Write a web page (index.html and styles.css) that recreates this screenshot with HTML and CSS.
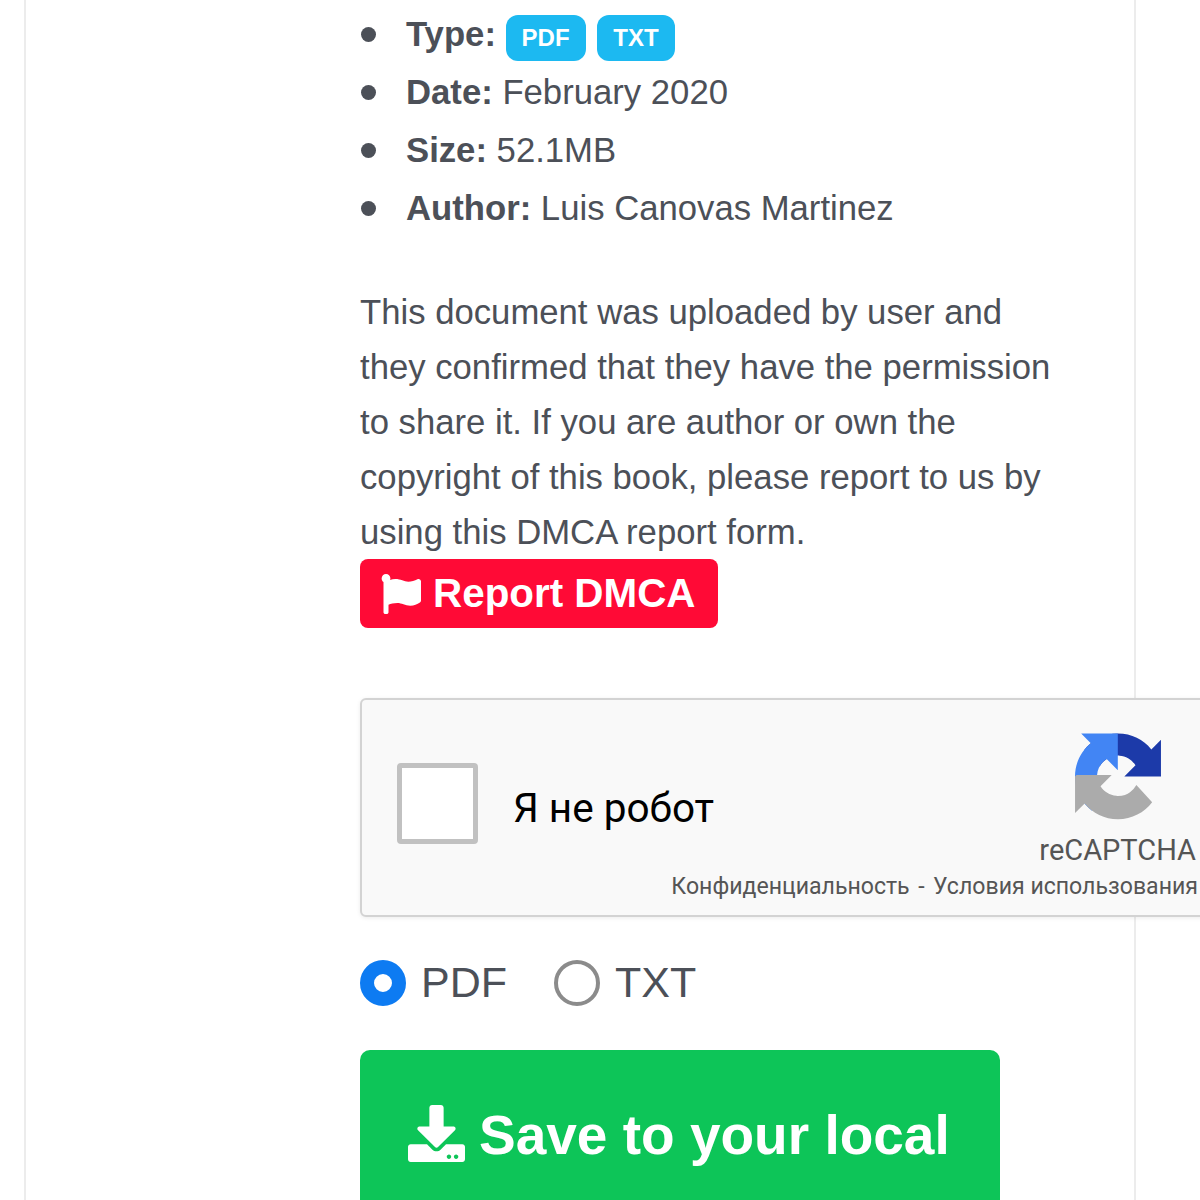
FILE: index.html
```
<!DOCTYPE html>
<html lang="en">
<head>
<meta charset="utf-8">
<title>Document</title>
<link rel="stylesheet" href="styles.css">
</head>
<body>
<main class="panel">
  <ul class="meta">
    <li><b>Type:</b> <span class="badge">PDF</span> <span class="badge">TXT</span></li>
    <li><b>Date:</b> February 2020</li>
    <li><b>Size:</b> 52.1MB</li>
    <li><b>Author:</b> Luis Canovas Martinez</li>
  </ul>
  <p class="notice">This document was uploaded by user and they confirmed that they have the permission to share it. If you are author or own the copyright of this book, please report to us by using this DMCA report form.</p>
  <a class="report" href="#">
    <svg class="report-icon" viewBox="0 0 512 512"><path fill="currentColor" d="M349.565 98.783C295.978 98.783 251.721 64 184.348 64c-24.955 0-47.309 4.384-68.045 12.013a55.947 55.947 0 0 0 3.586-23.562C118.117 24.015 94.806 1.206 66.338.048 34.345-1.254 8 24.296 8 56c0 19.026 9.497 35.825 24 45.945V488c0 13.255 10.745 24 24 24h16c13.255 0 24-10.745 24-24v-94.4c28.311-12.064 63.582-22.122 114.435-22.122 53.588 0 97.844 34.783 165.217 34.783 48.169 0 86.667-16.294 122.505-40.858C506.84 359.452 512 349.571 512 339.045v-243.1c0-23.393-24.269-38.87-45.485-29.016-34.338 15.948-76.454 31.854-116.95 31.854z"/></svg>
    Report DMCA
  </a>
  <div class="captcha">
    <span class="captcha-box"></span>
    <span class="captcha-label">Я не робот</span>
    <div class="captcha-side">
      <div class="captcha-brand">
        <svg class="captcha-logo" viewBox="0 0 64 64">
          <path fill="#1c3aa9" d="M64 31.955l-.033-1.37V4.687l-7.16 7.16C50.948 4.674 42.033.093 32.05.093c-10.4 0-19.622 4.96-25.458 12.64l11.736 11.86a15.55 15.55 0 0 1 4.754-5.334c2.05-1.6 4.952-2.906 8.968-2.906.485 0 .86.057 1.135.163 4.976.393 9.29 3.14 11.83 7.126l-8.307 8.307 26.2.001"/>
          <path fill="#4285f4" d="M31.862.001l-1.37.033H4.594l7.16 7.16C4.58 13.053 0 21.968 0 31.95c0 10.4 4.96 19.622 12.64 25.458L24.5 45.672a15.55 15.55 0 0 1-5.334-4.754c-1.6-2.05-2.906-4.952-2.906-8.968 0-.485.057-.86.163-1.135.393-4.976 3.14-9.29 7.126-11.83l8.307 8.307.001-26.2"/>
          <path fill="#ababab" d="M.001 31.955l.033 1.37v25.898l7.16-7.16c5.86 7.173 14.774 11.754 24.76 11.754 10.4 0 19.622-4.96 25.458-12.64L45.677 38.32a15.55 15.55 0 0 1-4.754 5.334c-2.05 1.6-4.952 2.906-8.968 2.906-.485 0-.86-.057-1.135-.163-4.976-.393-9.29-3.14-11.83-7.126l8.307-8.307-26.2-.001"/>
        </svg>
        <span class="captcha-name">reCAPTCHA</span>
      </div>
      <span class="captcha-links">Конфиденциальность<span class="captcha-sep">-</span>Условия использования</span>
    </div>
  </div>
  <div class="formats">
    <label class="format"><span class="radio radio-on"></span>PDF</label>
    <label class="format"><span class="radio"></span>TXT</label>
  </div>
  <a class="save" href="#">
    <svg class="save-icon" viewBox="0 0 512 512"><path fill="currentColor" d="M216 0h80c13.3 0 24 10.7 24 24v168h87.7c17.8 0 26.7 21.5 14.1 34.1L269.7 378.3c-7.5 7.5-19.8 7.5-27.3 0L90.1 226.1c-12.6-12.6-3.7-34.1 14.1-34.1H192V24c0-13.3 10.7-24 24-24zm296 376v112c0 13.3-10.7 24-24 24H24c-13.3 0-24-10.7-24-24V376c0-13.3 10.7-24 24-24h146.7l49 49c20.1 20.1 52.5 20.1 72.6 0l49-49H488c13.3 0 24 10.7 24 24zm-124 88c0-11-9-20-20-20s-20 9-20 20 9 20 20 20 20-9 20-20zm64 0c0-11-9-20-20-20s-20 9-20 20 9 20 20 20 20-9 20-20z"/></svg>
    Save to your local
  </a>
</main>
</body>
</html>
```
FILE: styles.css
```
html, body {
  margin: 0;
  height: 1200px;
  overflow: hidden;
  background: #fff;
}
body {
  font-family: "Liberation Sans", Arial, sans-serif;
  color: #4c5058;
  font-size: 34.7px;
}
.panel {
  box-sizing: border-box;
  width: 1112px;
  height: 1200px;
  margin-left: 24px;
  padding: 5px 0 0 334px;
  border-left: 2px solid #ececec;
  border-right: 2px solid #ececec;
}
.meta {
  margin: 0;
  padding: 0;
  list-style: none;
}
.meta li {
  height: 58px;
  line-height: 58px;
  white-space: nowrap;
}
.meta li::before {
  content: "";
  display: inline-block;
  width: 15px;
  height: 15px;
  margin: 0 30px 0 1px;
  border-radius: 50%;
  background: #4c5058;
  vertical-align: 4px;
}
.meta b {
  font-weight: 700;
}
.badge {
  display: inline-block;
  height: 46px;
  line-height: 46px;
  padding: 0 16px;
  border-radius: 12px;
  background: #1cb9f1;
  color: #fff;
  font-size: 24px;
  font-weight: 700;
}
.badge + .badge {
  margin-left: 2px;
}
.notice {
  width: 700px;
  margin: 48px 0 0;
  line-height: 55px;
}
.report {
  display: flex;
  align-items: center;
  gap: 12px;
  width: 358px;
  height: 69px;
  box-sizing: border-box;
  padding-left: 21px;
  margin-top: -1px;
  border-radius: 8px;
  background: #ff0a36;
  color: #fff;
  font-size: 40.4px;
  font-weight: 700;
  text-decoration: none;
  white-space: nowrap;
}
.report-icon {
  width: 40px;
  height: 40px;
  flex: none;
}
.captcha {
  display: flex;
  align-items: center;
  box-sizing: border-box;
  width: 870px;
  height: 219px;
  margin-top: 70px;
  padding: 0 30px 0 35px;
  border: 2px solid #d3d3d3;
  border-radius: 6px;
  background: #f9f9f9;
  box-shadow: 0 1px 4px rgba(0, 0, 0, 0.08);
  font-family: Roboto, sans-serif;
}
.captcha-box {
  flex: none;
  box-sizing: border-box;
  width: 81px;
  height: 81px;
  margin-top: -8px;
  border: 5px solid #c1c1c1;
  border-radius: 4px;
  background: #fff;
}
.captcha-label {
  flex: none;
  margin: 1px -60px 0 35px;
  color: #000;
  font-size: 40.5px;
  white-space: nowrap;
}
.captcha-side {
  flex: none;
  display: flex;
  flex-direction: column;
  align-items: flex-end;
  margin-left: auto;
  padding-top: 20px;
}
.captcha-brand {
  display: flex;
  flex-direction: column;
  align-items: center;
  margin-right: 2px;
}
.captcha-logo {
  width: 86px;
  height: 87px;
}
.captcha-name {
  margin-top: 10px;
  color: #555;
  font-size: 29px;
  line-height: 40px;
}
.captcha-links {
  margin-top: 2px;
  color: #555;
  font-size: 23.1px;
  line-height: 30px;
  white-space: nowrap;
}
.captcha-sep {
  margin: 0 8.5px;
}
.formats {
  display: flex;
  gap: 47px;
  margin-top: 43px;
}
.format {
  display: flex;
  align-items: center;
  gap: 15px;
  height: 44px;
  font-size: 43px;
}
.radio {
  align-self: flex-start;
  box-sizing: border-box;
  width: 46px;
  height: 46px;
  border: 4px solid #8b8b8b;
  border-radius: 50%;
  background: #fff;
}
.radio-on {
  border: 14px solid #0d7bf2;
}
.save {
  display: flex;
  align-items: center;
  gap: 14px;
  box-sizing: border-box;
  width: 640px;
  height: 170px;
  margin-top: 46px;
  padding: 0 0 0 48px;
  border-radius: 10px;
  background: #0dc558;
  color: #fff;
  font-size: 55px;
  font-weight: 700;
  text-decoration: none;
  white-space: nowrap;
}
.save-icon {
  width: 57px;
  height: 57px;
  flex: none;
  margin-top: -3px;
}
```
